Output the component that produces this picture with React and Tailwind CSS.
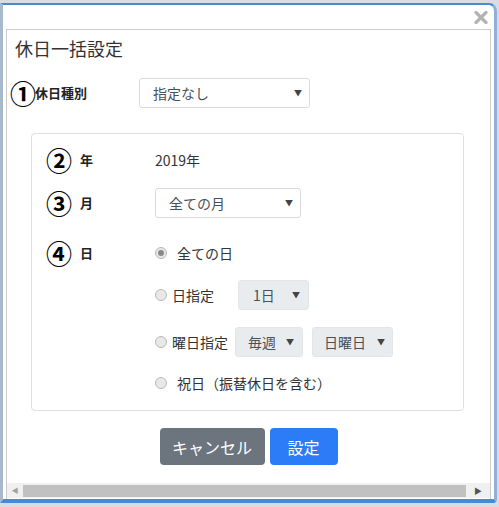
import React from "react";

const jp = { fontFamily: '"Noto Sans CJK JP", "Noto Sans", sans-serif' };

function Arrow() {
  return <span className="text-[8px] leading-none text-[#444]">▼</span>;
}

function Select({ text, w, disabled, pl = "pl-[13px]", pr = "pr-[7px]" }) {
  return (
    <div
      className={`flex h-[30px] items-center justify-between rounded-[3px] border ${pl} ${pr} text-[14px] text-[#495057] ${
        disabled ? "border-[#e3e6e9] bg-[#e9ecef]" : "border-[#d8dbde] bg-white"
      }`}
      style={{ width: w }}
    >
      <span>{text}</span>
      <Arrow />
    </div>
  );
}

function Radio({ checked }) {
  return (
    <span className="flex h-[12px] w-[12px] shrink-0 items-center justify-center rounded-full border border-[#b9b9b9] bg-[#e8e8e8]">
      {checked && <span className="h-[6px] w-[6px] rounded-full bg-[#8a8a8a]" />}
    </span>
  );
}

function Num({ n }) {
  return <span className="w-[34px] shrink-0 text-[26px] font-bold leading-none text-black">{n}</span>;
}

export default function App() {
  return (
    <div className="h-[507px] w-[499px] overflow-hidden bg-[#d9dde2] pt-[3px]" style={jp}>
      <div className="flex h-[500px] w-[497px] flex-col rounded-tr-[8px] rounded-br-[4px] border-t-2 border-b-[4px] border-l-[3px] border-r-[3px] border-t-[#4a8ad2] border-b-[#4a8ad2] border-l-[#a9b9cc] border-r-[#8fb1d8] bg-white">
        <div className="flex h-[24px] shrink-0 items-center justify-end pr-[6px]">
          <svg width="14" height="13" viewBox="0 0 14 13">
            <path d="M2 1.5 L12 11.5 M12 1.5 L2 11.5" stroke="#b3b3b3" strokeWidth="3.2" strokeLinecap="round" />
          </svg>
        </div>
        <div className="mx-[3px] flex flex-1 flex-col border border-b-0 border-[#cbcbcb]">
          <div className="ml-[8px] mt-[7px] text-[18px] leading-[22px] text-[#333]">休日一括設定</div>

          <div className="mt-[19px] flex h-[30px] items-center">
            <span className="ml-[3px] w-[25px] text-[26px] font-bold leading-none text-black">①</span>
            <span className="w-[104px] text-[13px] font-bold text-[#222]">休日種別</span>
            <Select text="指定なし" w={171} />
          </div>

          <div className="ml-[24px] mt-[25px] flex w-[433px] flex-col rounded-[4px] border border-[#dedede] pb-[13px] pl-[14px]">
            <div className="mt-[12px] flex h-[28px] items-center">
              <Num n="②" />
              <span className="w-[75px] text-[13px] font-bold text-[#222]">年</span>
              <span className="text-[14px] text-[#333]">2019年</span>
            </div>
            <div className="mt-[14px] flex h-[30px] items-center">
              <Num n="③" />
              <span className="w-[75px] text-[13px] font-bold text-[#222]">月</span>
              <Select text="全ての月" w={146} />
            </div>
            <div className="mt-[21px] flex items-start">
              <div className="flex h-[28px] items-center">
                <Num n="④" />
                <span className="w-[75px] text-[13px] font-bold text-[#222]">日</span>
              </div>
              <div className="flex flex-col text-[14px] text-[#333]">
                <div className="flex h-[28px] items-center">
                  <Radio checked />
                  <span className="ml-[10px]">全ての日</span>
                </div>
                <div className="mt-[13px] flex h-[30px] items-center">
                  <Radio />
                  <span className="ml-[5px] w-[66px]">日指定</span>
                  <Select text="1日" w={71} disabled pl="pl-[14px]" pr="pr-[8px]" />
                </div>
                <div className="mt-[17px] flex h-[30px] items-center">
                  <Radio />
                  <span className="ml-[5px] w-[63px]">曜日指定</span>
                  <Select text="毎週" w={68} disabled pl="pl-[12px]" pr="pr-[8px]" />
                  <span className="w-[9px]" />
                  <Select text="日曜日" w={81} disabled pl="pl-[11px]" pr="pr-[7px]" />
                </div>
                <div className="mt-[12px] flex h-[28px] items-center">
                  <Radio />
                  <span className="ml-[10px]">祝日（振替休日を含む）</span>
                </div>
              </div>
            </div>
          </div>

          <div className="mt-[17px] flex justify-center gap-[5px]">
            <div className="flex h-[37px] w-[105px] items-center justify-center rounded-[4px] bg-[#6c757d] text-[16px] text-white">
              キャンセル
            </div>
            <div className="flex h-[37px] w-[68px] items-center justify-center rounded-[4px] bg-[#2b7cf6] text-[16px] text-white">
              設定
            </div>
          </div>

          <div className="mt-auto mb-[1px] flex h-[15px] items-center bg-[#f0f0f0]">
            <span className="flex w-[16px] justify-center text-[7px] leading-none text-[#a3a3a3]">◀</span>
            <div className="h-[12px] flex-1 bg-[#c1c1c1]" />
            <span className="flex w-[24px] justify-center text-[8px] leading-none text-[#555]">▶</span>
          </div>
        </div>
      </div>
    </div>
  );
}
